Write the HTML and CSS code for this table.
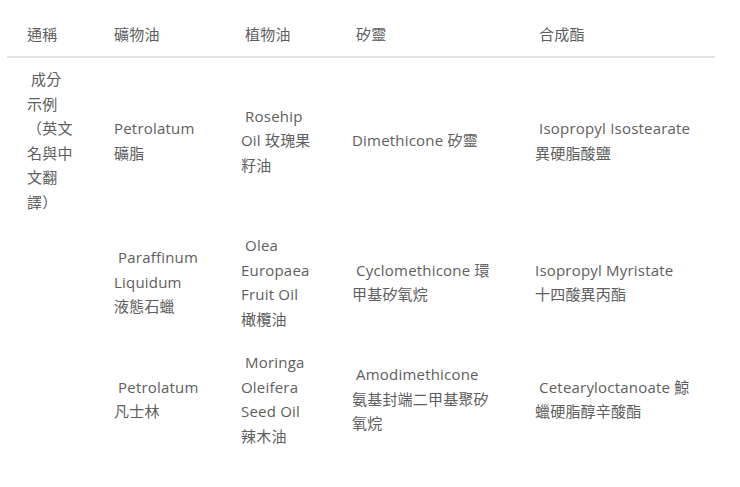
FILE: index.html
```html
<!DOCTYPE html>
<html lang="zh-Hant">
<head>
<meta charset="utf-8">
<title>成分示例</title>
<link rel="stylesheet" href="styles.css">
</head>
<body>
<div class="table">
  <div class="cell head first">通稱</div>
  <div class="cell head">礦物油</div>
  <div class="cell head">&nbsp;植物油</div>
  <div class="cell head">&nbsp;矽靈</div>
  <div class="cell head">&nbsp;合成酯</div>

  <div class="cell first">&nbsp;成分<br>示例<br>（英文<br>名與中<br>文翻<br>譯）</div>
  <div class="cell">Petrolatum<br>礦脂</div>
  <div class="cell">&nbsp;Rosehip<br>Oil 玫瑰果<br>籽油</div>
  <div class="cell">Dimethicone 矽靈</div>
  <div class="cell">&nbsp;Isopropyl Isostearate<br>異硬脂酸鹽</div>

  <div class="cell first"></div>
  <div class="cell">&nbsp;Paraffinum<br>Liquidum<br>液態石蠟</div>
  <div class="cell">&nbsp;Olea<br>Europaea<br>Fruit Oil<br>橄欖油</div>
  <div class="cell">&nbsp;Cyclomethicone 環<br>甲基矽氧烷</div>
  <div class="cell">Isopropyl Myristate<br>十四酸異丙酯</div>

  <div class="cell first"></div>
  <div class="cell">&nbsp;Petrolatum<br>凡士林</div>
  <div class="cell">&nbsp;Moringa<br>Oleifera<br>Seed Oil<br>辣木油</div>
  <div class="cell">&nbsp;Amodimethicone<br>氨基封端二甲基聚矽<br>氧烷</div>
  <div class="cell">&nbsp;Cetearyloctanoate 鯨<br>蠟硬脂醇辛酸酯</div>
</div>
</body>
</html>
```

FILE: styles.css
```css
html, body {
  margin: 0;
  padding: 0;
  background: #ffffff;
}

body {
  font-family: "Open Sans", "Noto Sans CJK TC", "Noto Sans", sans-serif;
  font-size: 15px;
  color: #5e5e5e;
}

.table {
  margin: 12px 0 0 7px;
  width: 708px;
  display: grid;
  grid-template-columns: 97px 127px 111px 183px 190px;
}

.cell {
  padding: 9.5px 0 9.5px 10px;
  line-height: 24.5px;
  letter-spacing: 0.2px;
  align-self: center;
  white-space: nowrap;
}

.cell.first {
  padding-left: 20px;
}

.cell.head {
  align-self: stretch;
  border-bottom: 2px solid #e3e3e3;
}
```
